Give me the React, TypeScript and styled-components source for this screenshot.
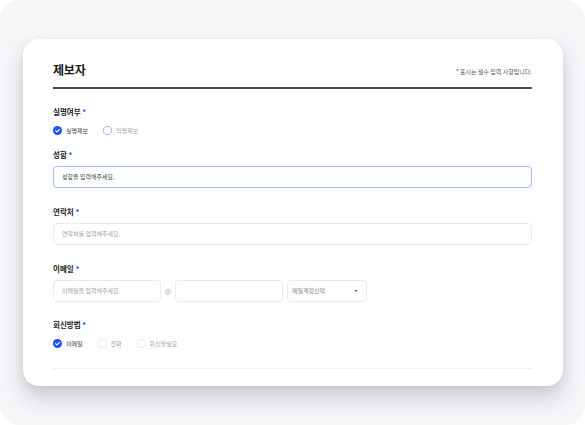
import React from "react";
import styled, { createGlobalStyle } from "styled-components";

const colors = {
  blue: "#2150f3",
  blueLight: "#a6bafc",
  text: "#1a1a1a",
  label: "#222",
  muted: "#a3a3a8",
  border: "#ebebee",
};

const GlobalStyle = createGlobalStyle`
  html, body {
    margin: 0;
    padding: 0;
    background: #fff;
  }
  body {
    font-family: "Noto Sans CJK KR", "Noto Sans", sans-serif;
    -webkit-font-smoothing: antialiased;
  }
`;

type Option = { label: string; checked?: boolean };

const Required = () => <Star>*</Star>;

const RadioMark = ({ checked, tone }: { checked?: boolean; tone: "blue" | "grey" }) =>
  checked ? (
    <svg width="9" height="9" viewBox="0 0 18 18">
      <circle cx="9" cy="9" r="9" fill={colors.blue} />
      <path
        d="M5.2 9.2 L7.9 11.8 L12.9 6.6"
        fill="none"
        stroke="#fff"
        strokeWidth="2.2"
        strokeLinecap="round"
        strokeLinejoin="round"
      />
    </svg>
  ) : (
    <svg width="9" height="9" viewBox="0 0 18 18">
      <circle
        cx="9"
        cy="9"
        r="8.2"
        fill="#fff"
        stroke={tone === "blue" ? "#86a1f6" : "#e2e2e6"}
        strokeWidth="1.6"
      />
    </svg>
  );

const RadioGroup = ({ options, tone }: { options: Option[]; tone: "blue" | "grey" }) => (
  <Radios>
    {options.map((o) => (
      <RadioItem key={o.label}>
        <RadioMark checked={o.checked} tone={tone} />
        <RadioText $checked={!!o.checked}>{o.label}</RadioText>
      </RadioItem>
    ))}
  </Radios>
);

export default function App() {
  return (
    <>
      <GlobalStyle />
      <Frame>
        <Card>
          <Header>
            <Title>제보자</Title>
            <Note>
              <Star>*</Star> 표시는 필수 입력 사항입니다.
            </Note>
          </Header>

          <Field $top={18} $gap={9}>
            <Label>
              실명여부 <Required />
            </Label>
            <RadioGroup
              tone="blue"
              options={[{ label: "실명제보", checked: true }, { label: "익명제보" }]}
            />
          </Field>

          <Field $top={15} $gap={6}>
            <Label>
              성함 <Required />
            </Label>
            <Input $focused>
              <Placeholder $dark>성함을 입력해주세요.</Placeholder>
            </Input>
          </Field>

          <Field $top={19} $gap={6}>
            <Label>
              연락처 <Required />
            </Label>
            <Input>
              <Placeholder>연락처를 입력해주세요.</Placeholder>
            </Input>
          </Field>

          <Field $top={19} $gap={6}>
            <Label>
              이메일 <Required />
            </Label>
            <EmailRow>
              <Input $width={108}>
                <Placeholder>이메일을 입력해주세요.</Placeholder>
              </Input>
              <At>@</At>
              <Input $width={108} />
              <Select>
                <SelectText>메일계정선택</SelectText>
                <Caret />
              </Select>
            </EmailRow>
          </Field>

          <Field $top={18} $gap={9}>
            <Label>
              회신방법 <Required />
            </Label>
            <RadioGroup
              tone="grey"
              options={[{ label: "이메일", checked: true }, { label: "전화" }, { label: "회신불필요" }]}
            />
          </Field>

          <Footer />
        </Card>
      </Frame>
    </>
  );
}

const Frame = styled.div`
  width: 585px;
  height: 425px;
  box-sizing: border-box;
  padding: 39px 0 0 23px;
  background: #f5f6f8;
  border-radius: 20px;
  overflow: hidden;
`;

const Card = styled.div`
  width: 540px;
  height: 347px;
  box-sizing: border-box;
  padding: 24px 31px 0 30px;
  background: #fff;
  border-radius: 16px;
  box-shadow: 0 12px 22px rgba(30, 34, 50, 0.2), 0 2px 6px rgba(30, 34, 50, 0.06);
  display: flex;
  flex-direction: column;
`;

const Header = styled.div`
  display: flex;
  justify-content: space-between;
  align-items: center;
  padding-bottom: 10px;
  border-bottom: 2px solid #4a4a4d;
`;

const Title = styled.h1`
  margin: 0;
  font-size: 12px;
  line-height: 14px;
  font-weight: 700;
  color: ${colors.text};
  letter-spacing: -0.2px;
`;

const Note = styled.span`
  padding-top: 4px;
  font-size: 6px;
  line-height: 8px;
  color: #555;
`;

const Star = styled.span`
  color: ${colors.blue};
`;

const Field = styled.section<{ $top: number; $gap: number }>`
  display: flex;
  flex-direction: column;
  margin-top: ${(p) => p.$top}px;
  gap: ${(p) => p.$gap}px;
`;

const Label = styled.div`
  font-size: 7.5px;
  line-height: 10px;
  font-weight: 700;
  color: ${colors.label};
`;

const Radios = styled.div`
  display: flex;
  align-items: center;
  gap: 15px;
  height: 9px;
`;

const RadioItem = styled.label`
  display: flex;
  align-items: center;
  gap: 4px;

  svg {
    display: block;
    flex-shrink: 0;
  }
`;

const RadioText = styled.span<{ $checked: boolean }>`
  font-size: 6px;
  line-height: 9px;
  color: ${(p) => (p.$checked ? "#444" : colors.muted)};
`;

const Input = styled.div<{ $focused?: boolean; $width?: number }>`
  box-sizing: border-box;
  height: 22px;
  width: ${(p) => (p.$width ? `${p.$width}px` : "100%")};
  flex-shrink: 0;
  display: flex;
  align-items: center;
  padding-left: 8px;
  border: 1px solid ${(p) => (p.$focused ? colors.blueLight : colors.border)};
  border-radius: 4px;
  background: #fff;
`;

const Placeholder = styled.span<{ $dark?: boolean }>`
  font-size: 6px;
  line-height: 8px;
  color: ${(p) => (p.$dark ? "#444" : colors.muted)};
`;

const EmailRow = styled.div`
  display: flex;
  align-items: center;
`;

const At = styled.span`
  width: 14px;
  text-align: center;
  font-size: 7px;
  color: #aaa;
`;

const Select = styled.div`
  box-sizing: border-box;
  margin-left: 4px;
  width: 80px;
  height: 22px;
  display: flex;
  align-items: center;
  justify-content: space-between;
  padding: 0 8px 0 4px;
  border: 1px solid ${colors.border};
  border-radius: 4px;
`;

const SelectText = styled.span`
  font-size: 6px;
  line-height: 8px;
  color: #888;
`;

const Caret = styled.span`
  width: 0;
  height: 0;
  border-left: 2px solid transparent;
  border-right: 2px solid transparent;
  border-top: 2px solid #777;
`;

const Footer = styled.div`
  margin-top: 20px;
  border-top: 1px solid #eeeff1;
`;
